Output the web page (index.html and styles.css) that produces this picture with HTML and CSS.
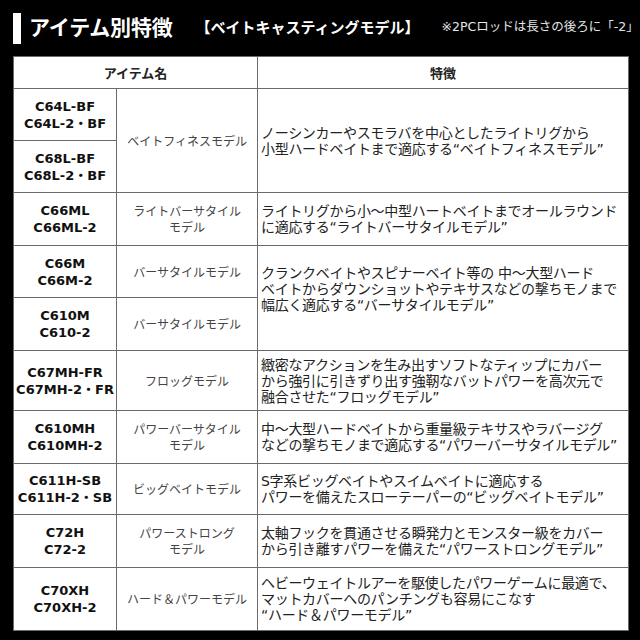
FILE: index.html
```html
<!DOCTYPE html>
<html lang="ja">
<head>
<meta charset="utf-8">
<title>アイテム別特徴</title>
<link rel="stylesheet" href="styles.css">
</head>
<body>
<div class="page">
  <header class="head">
    <span class="bar"></span>
    <h1 class="title">アイテム別特徴</h1>
    <span class="subtitle">【ベイトキャスティングモデル】</span>
    <span class="note">※2PCロッドは長さの後ろに「-2」</span>
  </header>
  <table class="spec">
    <colgroup><col class="c-name"><col class="c-type"><col class="c-desc"></colgroup>
    <thead>
      <tr class="r-head"><th colspan="2">アイテム名</th><th>特徴</th></tr>
    </thead>
    <tbody>
      <tr class="r52"><td class="name">C64L-BF<br>C64L-2・BF</td><td class="type" rowspan="2">ベイトフィネスモデル</td><td class="desc" rowspan="2">ノーシンカーやスモラバを中心としたライトリグから<br>小型ハードベイトまで適応する“ベイトフィネスモデル”</td></tr>
      <tr class="r52"><td class="name">C68L-BF<br>C68L-2・BF</td></tr>
      <tr class="r53"><td class="name">C66ML<br>C66ML-2</td><td class="type">ライトバーサタイル<br>モデル</td><td class="desc">ライトリグから小～中型ハートベイトまでオールラウンド<br>に適応する“ライトバーサタイルモデル”</td></tr>
      <tr class="r52"><td class="name">C66M<br>C66M-2</td><td class="type">バーサタイルモデル</td><td class="desc lift" rowspan="2">クランクベイトやスピナーベイト等の 中～大型ハード<br>ベイトからダウンショットやテキサスなどの撃ちモノまで<br>幅広く適応する“バーサタイルモデル”</td></tr>
      <tr class="r53"><td class="name">C610M<br>C610-2</td><td class="type">バーサタイルモデル</td></tr>
      <tr class="r60"><td class="name">C67MH-FR<br>C67MH-2・FR</td><td class="type">フロッグモデル</td><td class="desc">緻密なアクションを生み出すソフトなティップにカバー<br>から強引に引きずり出す強靭なバットパワーを高次元で<br>融合させた“フロッグモデル”</td></tr>
      <tr class="r53"><td class="name">C610MH<br>C610MH-2</td><td class="type">パワーバーサタイル<br>モデル</td><td class="desc">中～大型ハードベイトから重量級テキサスやラバージグ<br>などの撃ちモノまで適応する“パワーバーサタイルモデル”</td></tr>
      <tr class="r51"><td class="name">C611H-SB<br>C611H-2・SB</td><td class="type">ビッグベイトモデル</td><td class="desc">S字系ビッグベイトやスイムベイトに適応する<br>パワーを備えたスローテーパーの“ビッグベイトモデル”</td></tr>
      <tr class="r53"><td class="name">C72H<br>C72-2</td><td class="type">パワーストロング<br>モデル</td><td class="desc">太軸フックを貫通させる瞬発力とモンスター級をカバー<br>から引き離すパワーを備えた“パワーストロングモデル”</td></tr>
      <tr class="r63"><td class="name">C70XH<br>C70XH-2</td><td class="type">ハード＆パワーモデル</td><td class="desc">ヘビーウェイトルアーを駆使したパワーゲームに最適で、<br>マットカバーへのパンチングも容易にこなす<br>“ハード＆パワーモデル”</td></tr>
    </tbody>
  </table>
</div>
</body>
</html>
```

FILE: styles.css
```css
html, body {
  margin: 0;
  padding: 0;
  background: #000;
}
body {
  width: 640px;
  height: 640px;
  overflow: hidden;
  font-family: "DejaVu Sans", "Noto Sans CJK JP", sans-serif;
}
.page {
  padding: 12px 0 0 13px;
}
.head {
  display: flex;
  align-items: center;
  height: 32px;
  margin-bottom: 12px;
  color: #fff;
}
.bar {
  width: 8px;
  height: 31px;
  background: #fff;
  flex: none;
}
.title {
  margin: 0 0 4px 8px;
  font-family: "Noto Sans CJK JP", sans-serif;
  font-size: 21px;
  font-weight: 700;
  line-height: 24px;
  letter-spacing: -0.2px;
}
.subtitle {
  margin: 0 0 3px 23px;
  font-family: "Noto Sans CJK JP", sans-serif;
  font-size: 15px;
  font-weight: 700;
  line-height: 20px;
}
.note {
  margin: 0 0 3px 22px;
  font-size: 12.5px;
  line-height: 18px;
  color: #e6e6e6;
  white-space: nowrap;
}
.spec {
  width: 615px;
  border-collapse: collapse;
  table-layout: fixed;
  background: #fff;
}
.c-name { width: 103px; }
.c-type { width: 141px; }
.c-desc { width: 371px; }
.spec th, .spec td {
  border: 1px solid #6a6a6a;
  padding: 0;
  vertical-align: middle;
}
.spec th {
  font-family: "Noto Sans CJK JP", sans-serif;
  font-size: 13px;
  font-weight: 700;
  color: #222;
  text-align: center;
  line-height: 16px;
}
.r-head { height: 32px; }
.r51 { height: 51px; }
.r52 { height: 52px; }
.r53 { height: 53px; }
.r60 { height: 60px; }
.r63 { height: 63px; }
.name {
  font-size: 13px;
  font-weight: 700;
  color: #111;
  text-align: center;
  line-height: 17px;
  white-space: nowrap;
}
.type {
  font-family: "Noto Sans CJK JP", sans-serif;
  font-size: 12px;
  color: #444;
  text-align: center;
  line-height: 16px;
}
.desc {
  font-size: 14px;
  color: #222;
  line-height: 16px;
  letter-spacing: -0.3px;
  white-space: nowrap;
  text-align: left;
}
.spec td.desc {
  padding-left: 3px;
}
.spec td.lift {
  padding-bottom: 18px;
}
```
